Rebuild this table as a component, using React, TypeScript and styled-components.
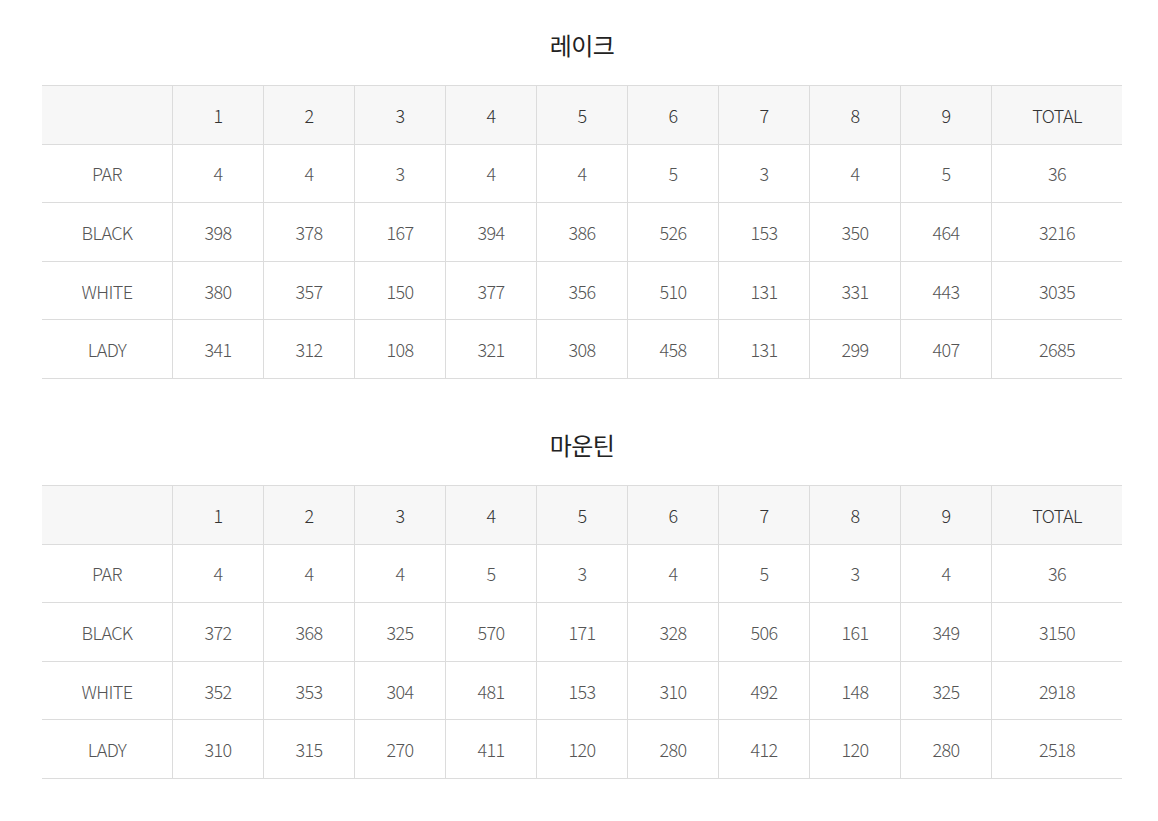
import {FC} from "react"
import styled, {createGlobalStyle} from "styled-components"

const GlobalStyle = createGlobalStyle`
    html, body {
        margin: 0;
        padding: 0;
        background: #fff;
    }
    body {
        font-family: "Noto Sans CJK KR", "Noto Sans", sans-serif;
        font-weight: 300;
        color: #555;
    }
`

interface Course {
    name: string,
    rows: {label: string, values: number[], total: number}[]
}

const courses: Course[] = [
    {
        name: "레이크",
        rows: [
            {label: "PAR", values: [4, 4, 3, 4, 4, 5, 3, 4, 5], total: 36},
            {label: "BLACK", values: [398, 378, 167, 394, 386, 526, 153, 350, 464], total: 3216},
            {label: "WHITE", values: [380, 357, 150, 377, 356, 510, 131, 331, 443], total: 3035},
            {label: "LADY", values: [341, 312, 108, 321, 308, 458, 131, 299, 407], total: 2685}
        ]
    },
    {
        name: "마운틴",
        rows: [
            {label: "PAR", values: [4, 4, 4, 5, 3, 4, 5, 3, 4], total: 36},
            {label: "BLACK", values: [372, 368, 325, 570, 171, 328, 506, 161, 349], total: 3150},
            {label: "WHITE", values: [352, 353, 304, 481, 153, 310, 492, 148, 325], total: 2918},
            {label: "LADY", values: [310, 315, 270, 411, 120, 280, 412, 120, 280], total: 2518}
        ]
    }
]

const Page = styled.div`
    padding: 27px 36px 40px 42px;
`

const Section = styled.section`
    & + & {
        margin-top: 48px;
    }
`

const Title = styled.h3`
    margin: 0 0 22px;
    font-size: 24px;
    line-height: 36px;
    font-weight: 400;
    color: #222;
    text-align: center;
    letter-spacing: -0.5px;
`

const Table = styled.table`
    width: 1080px;
    border-collapse: collapse;
    table-layout: fixed;
    border-top: 1px solid #dcdcdc;
`

const Cell = styled.td<{$head?: boolean, $wide?: boolean}>`
    width: ${p => p.$wide ? "130px" : "auto"};
    height: 57.6px;
    padding: 0;
    text-align: center;
    font-size: 18px;
    font-weight: 300;
    letter-spacing: -0.6px;
    color: ${p => p.$head ? "#333" : "#555"};
    background: ${p => p.$head ? "#f7f7f7" : "#fff"};
    border-bottom: 1px solid #dcdcdc;
    border-left: 1px solid #dcdcdc;

    &:first-child {
        border-left: none;
    }
`

const ScoreTable: FC<{course: Course}> = ({course}) => (
    <Section>
        <Title>{course.name}</Title>
        <Table>
            <thead>
                <tr>
                    <Cell as="th" $head $wide/>
                    {Array.from({length: 9}, (_, i) => (
                        <Cell as="th" $head key={i}>{i + 1}</Cell>
                    ))}
                    <Cell as="th" $head $wide>TOTAL</Cell>
                </tr>
            </thead>
            <tbody>
                {course.rows.map(row => (
                    <tr key={row.label}>
                        <Cell $wide>{row.label}</Cell>
                        {row.values.map((v, i) => <Cell key={i}>{v}</Cell>)}
                        <Cell $wide>{row.total}</Cell>
                    </tr>
                ))}
            </tbody>
        </Table>
    </Section>
)

const App: FC = () => (
    <Page>
        <GlobalStyle/>
        {courses.map(c => <ScoreTable key={c.name} course={c}/>)}
    </Page>
)

export default App
